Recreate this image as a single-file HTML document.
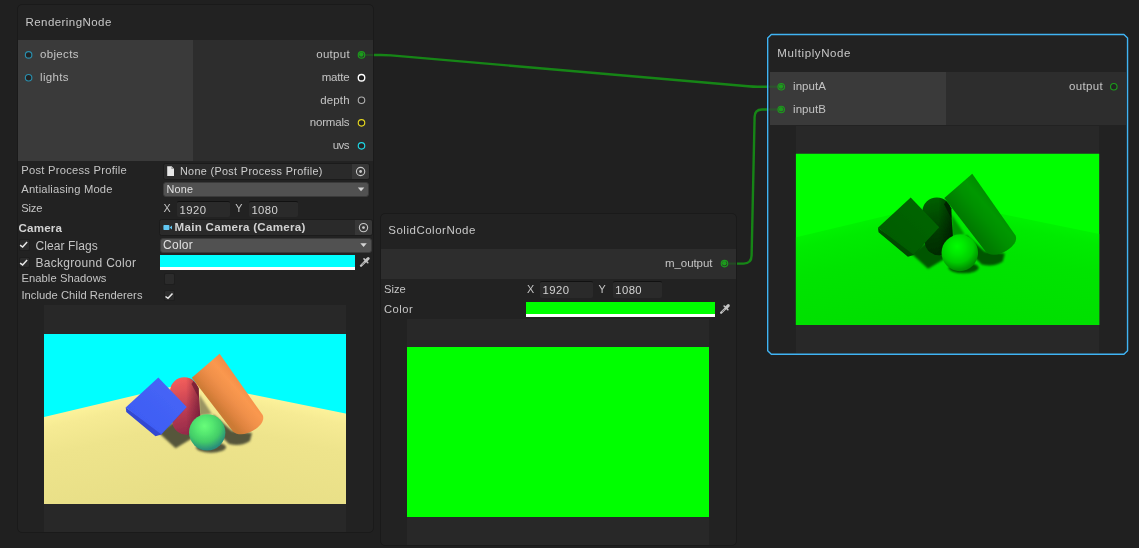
<!DOCTYPE html>
<html><head><meta charset="utf-8"><title>Graph</title>
<style>
html,body{margin:0;padding:0;}
body{width:1139px;height:548px;overflow:hidden;background:#202020;position:relative;font-family:'Liberation Sans',sans-serif;}
.a{position:absolute;box-sizing:border-box;}
.t{position:absolute;white-space:pre;line-height:20px;height:20px;}
.node{border:1px solid #1a1a1a;border-radius:5px;background:#222222;}
.in{background:#3a3a3a;}
.out{background:#2d2d2d;}
.obj{background:#2a2a2a;border:1px solid #1b1b1b;border-radius:2.5px;}
.sel{background:#373737;border-radius:0 2px 2px 0;}
.dd{background:#515151;border:0.5px solid #3a3a3a;border-radius:3px;}
.num{background:#2a2a2a;border:0;border-top:1px solid #111111;border-radius:2px;}
.chk{background:#2b2b2b;border:1px solid #1e1e1e;border-radius:2px;}
.prev{background:#282828;}
svg{position:absolute;overflow:visible;}
.txt{position:absolute;left:0;top:0;width:1139px;height:548px;will-change:transform;}

</style></head>
<body>
<!-- RenderingNode -->
<div class="a node" style="left:17.3px;top:4px;width:356.8px;height:528.7px;"></div>
<div class="a in" style="left:18px;top:40px;width:175px;height:121px;"></div>
<div class="a out" style="left:193px;top:40px;width:180px;height:121px;"></div>
<!-- inspector fields -->
<div class="a obj" style="left:163.3px;top:163px;width:206.5px;height:16.7px;"></div>
<div class="a sel" style="left:352px;top:164px;width:16.8px;height:14.7px;"></div>
<div class="a dd" style="left:163.4px;top:181.7px;width:206px;height:15.5px;"></div>
<div class="a num" style="left:177px;top:200.5px;width:53px;height:16.5px;"></div>
<div class="a num" style="left:249px;top:200.5px;width:49px;height:16.5px;"></div>
<div class="a obj" style="left:159.3px;top:219.3px;width:213.5px;height:16.4px;"></div>
<div class="a sel" style="left:355px;top:220.3px;width:16.8px;height:14.4px;"></div>
<div class="a dd" style="left:159.8px;top:237.8px;width:212.5px;height:15.2px;"></div>
<div class="a" style="left:159.9px;top:254.7px;width:195.3px;height:12.2px;background:#00ffff;"></div>
<div class="a" style="left:159.9px;top:266.9px;width:195.3px;height:3.3px;background:#ffffff;"></div>
<div class="a chk" style="left:18.5px;top:239px;width:11px;height:11.5px;"></div>
<div class="a chk" style="left:18.5px;top:256.5px;width:11px;height:11.5px;"></div>
<div class="a chk" style="left:163.5px;top:272.8px;width:11px;height:11.8px;"></div>
<div class="a chk" style="left:163.5px;top:289.6px;width:11px;height:11.8px;"></div>
<div class="a prev" style="left:44px;top:305px;width:302px;height:227px;"></div>

<!-- SolidColorNode -->
<div class="a node" style="left:379.8px;top:213px;width:357.2px;height:333.2px;"></div>
<div class="a out" style="left:380.5px;top:249px;width:355.5px;height:30px;"></div>
<div class="a num" style="left:540px;top:281.2px;width:52.5px;height:16.5px;"></div>
<div class="a num" style="left:613px;top:281.2px;width:49px;height:16.5px;"></div>
<div class="a" style="left:526px;top:301.7px;width:189.1px;height:12.3px;background:#00ff00;"></div>
<div class="a" style="left:526px;top:314px;width:189.1px;height:3.2px;background:#ffffff;"></div>
<div class="a prev" style="left:407px;top:319.4px;width:302px;height:225.6px;"></div>
<div class="a" style="left:407px;top:347px;width:302px;height:170px;background:#00ff00;"></div>

<!-- MultiplyNode -->
<div class="a node" style="left:767.5px;top:34.3px;width:360.3px;height:320.3px;border-radius:5px;"></div>
<div class="a in" style="left:769.5px;top:72px;width:176.5px;height:53px;"></div>
<div class="a out" style="left:946px;top:72px;width:179.5px;height:53px;"></div>
<div class="a prev" style="left:796px;top:126px;width:303px;height:226.5px;"></div>

<svg width="1139" height="548" viewBox="0 0 1139 548" style="left:0;top:0;">
<defs>
  <linearGradient id="floorL" gradientUnits="userSpaceOnUse" x1="191" y1="382" x2="216.5" y2="489"><stop offset="0" stop-color="#fcf29a"/><stop offset="0.1" stop-color="#f6eb94"/><stop offset="0.35" stop-color="#eee48c"/><stop offset="1" stop-color="#e7de86"/></linearGradient>
  <linearGradient id="floorR" gradientUnits="userSpaceOnUse" x1="191" y1="382" x2="169" y2="489.8"><stop offset="0" stop-color="#fcf29a"/><stop offset="0.1" stop-color="#f6eb94"/><stop offset="0.35" stop-color="#eee48c"/><stop offset="1" stop-color="#e7de86"/></linearGradient>
  <radialGradient id="vig" gradientUnits="userSpaceOnUse" cx="195" cy="400" r="190">
    <stop offset="0" stop-color="#000" stop-opacity="0"/><stop offset="0.6" stop-color="#000" stop-opacity="0"/><stop offset="1" stop-color="#000" stop-opacity="0.06"/>
  </radialGradient>
  <radialGradient id="sph" gradientUnits="userSpaceOnUse" cx="204.5" cy="426" r="27">
    <stop offset="0" stop-color="#68fd7a"/><stop offset="0.3" stop-color="#55e870"/><stop offset="0.6" stop-color="#42cc68"/><stop offset="0.85" stop-color="#2c9478"/><stop offset="1" stop-color="#267c80"/>
  </radialGradient>
  <linearGradient id="cyl" gradientUnits="userSpaceOnUse" x1="191.8" y1="377.8" x2="219.6" y2="353.8">
    <stop offset="0" stop-color="#cc7a34"/><stop offset="0.2" stop-color="#e08440"/><stop offset="0.45" stop-color="#f0904a"/><stop offset="0.72" stop-color="#fa984f"/><stop offset="1" stop-color="#f28c46"/>
  </linearGradient>
  <linearGradient id="cap" gradientUnits="userSpaceOnUse" x1="178" y1="376" x2="192" y2="436">
    <stop offset="0" stop-color="#f8625c"/><stop offset="0.25" stop-color="#e05258"/><stop offset="0.6" stop-color="#b83a52"/><stop offset="1" stop-color="#902848"/>
  </linearGradient>
  <linearGradient id="capsh" gradientUnits="userSpaceOnUse" x1="186" y1="0" x2="200" y2="0">
    <stop offset="0" stop-color="#50102a" stop-opacity="0"/><stop offset="1" stop-color="#50102a" stop-opacity="0.55"/>
  </linearGradient>
  <linearGradient id="cube" gradientUnits="userSpaceOnUse" x1="175" y1="385" x2="140" y2="425">
    <stop offset="0" stop-color="#4766f6"/><stop offset="1" stop-color="#3d5cf4"/>
  </linearGradient>
  <filter id="blur2" x="-50%" y="-50%" width="200%" height="200%"><feGaussianBlur stdDeviation="1.0"/></filter>
  <filter id="blur1" x="-20%" y="-20%" width="140%" height="140%"><feGaussianBlur stdDeviation="0.45"/></filter>
  <filter id="gonly" color-interpolation-filters="sRGB" x="0" y="0" width="100%" height="100%">
    <feColorMatrix type="matrix" values="0 0 0 0 0  0 1 0 0 0  0 0 0 0 0  0 0 0 1 0"/>
  </filter>
  <clipPath id="clipA"><rect x="44" y="334" width="302" height="170"/></clipPath>
</defs>
<g clip-path="url(#clipA)">
    <rect x="43" y="333" width="304" height="172" fill="#00ffff"/>
    <g filter="url(#blur1)"><path d="M40 418 L191.5 381.9 L191.5 508 L40 508 Z" fill="url(#floorL)"/><path d="M191 382 L350 414.4 L350 508 L191 508 Z" fill="url(#floorR)"/></g>
    <!-- shadows -->
    <g filter="url(#blur2)" fill="#56563a">
      <path d="M159 433 L175.6 448.3 L191 439 L197 426 L172 423 Z"/>
      <ellipse cx="211" cy="447.3" rx="15" ry="5.4"/>
      <path d="M213 414 L232 431 L252 433 L250 441 Q241 447 229 444 L216 431 Z"/>
      <path d="M199 394 L212 414 L199 416 Z" fill="#9a9462"/>
    </g>
    <!-- red capsule -->
    <g filter="url(#blur1)">
    <path d="M170 391.6 A14.3 14.3 0 0 1 198.6 391.6 L200.6 421 A14.2 14.2 0 0 1 172.4 423 Z" fill="url(#cap)"/>
    <path d="M170 391.6 A14.3 14.3 0 0 1 198.6 391.6 L200.6 421 A14.2 14.2 0 0 1 172.4 423 Z" fill="url(#capsh)"/>
    <path d="M193.5 381 L199 388 L198.8 398 L191.5 384 Z" fill="#6a1830" opacity="0.7"/>
    </g>
    <!-- orange cylinder -->
    <path d="M191.8 377.8 L219.6 353.8 L262.7 415.1 C264.8 420 261 425.5 254 430 C247 434.5 238 436 233 431.4 Z" fill="url(#cyl)" filter="url(#blur1)"/>
    <!-- blue cube -->
    <g filter="url(#blur1)">
    <path d="M125.7 407.5 L126.3 412 L155.5 436.2 L161.4 434.6 L186.7 407 L160 431 Z" fill="#3348d2"/>
    <path d="M158.3 377.4 L186.7 406.9 L161.2 434.3 L125.7 407.5 Z" fill="url(#cube)"/>
    </g>
    <!-- green sphere -->
    <circle cx="207.2" cy="432.4" r="18.2" fill="url(#sph)" filter="url(#blur1)"/>
</g>
<g transform="translate(795.9,153.8) scale(1.0043,1.0065) translate(-44,-334)" filter="url(#gonly)">
<g clip-path="url(#clipA)">
    <rect x="43" y="333" width="304" height="172" fill="#00ffff"/>
    <g filter="url(#blur1)"><path d="M40 418 L191.5 381.9 L191.5 508 L40 508 Z" fill="url(#floorL)"/><path d="M191 382 L350 414.4 L350 508 L191 508 Z" fill="url(#floorR)"/></g>
    <!-- shadows -->
    <g filter="url(#blur2)" fill="#56563a">
      <path d="M159 433 L175.6 448.3 L191 439 L197 426 L172 423 Z"/>
      <ellipse cx="211" cy="447.3" rx="15" ry="5.4"/>
      <path d="M213 414 L232 431 L252 433 L250 441 Q241 447 229 444 L216 431 Z"/>
      <path d="M199 394 L212 414 L199 416 Z" fill="#9a9462"/>
    </g>
    <!-- red capsule -->
    <g filter="url(#blur1)">
    <path d="M170 391.6 A14.3 14.3 0 0 1 198.6 391.6 L200.6 421 A14.2 14.2 0 0 1 172.4 423 Z" fill="url(#cap)"/>
    <path d="M170 391.6 A14.3 14.3 0 0 1 198.6 391.6 L200.6 421 A14.2 14.2 0 0 1 172.4 423 Z" fill="url(#capsh)"/>
    <path d="M193.5 381 L199 388 L198.8 398 L191.5 384 Z" fill="#6a1830" opacity="0.7"/>
    </g>
    <!-- orange cylinder -->
    <path d="M191.8 377.8 L219.6 353.8 L262.7 415.1 C264.8 420 261 425.5 254 430 C247 434.5 238 436 233 431.4 Z" fill="url(#cyl)" filter="url(#blur1)"/>
    <!-- blue cube -->
    <g filter="url(#blur1)">
    <path d="M125.7 407.5 L126.3 412 L155.5 436.2 L161.4 434.6 L186.7 407 L160 431 Z" fill="#3348d2"/>
    <path d="M158.3 377.4 L186.7 406.9 L161.2 434.3 L125.7 407.5 Z" fill="url(#cube)"/>
    </g>
    <!-- green sphere -->
    <circle cx="207.2" cy="432.4" r="18.2" fill="url(#sph)" filter="url(#blur1)"/>
</g>
</g>
</svg>
<svg width="1139" height="548" viewBox="0 0 1139 548" style="left:0;top:0;">
<g fill="none" stroke="#168516" stroke-width="2.4" stroke-linecap="butt">
<path d="M373.9 55 L381 55 Q386 55 391 55.4 L748 86.2 Q753 86.7 758 86.7 L767 86.7"/>
<path d="M737 263.6 L743.5 263.6 Q751.5 263.6 751.6 255.6 L754.6 117 Q754.8 109.5 762 109.5 L767 109.5"/>
</g>
<g fill="none" stroke="#168516" stroke-width="2.2" opacity="0.32">
<path d="M365 55 L373 55"/><path d="M768.5 86.7 L777.5 86.7"/><path d="M728.5 263.6 L736 263.6"/><path d="M768.5 109.5 L777.5 109.5"/>
</g>
<circle cx="28.6" cy="54.9" r="3.25" fill="#232323" stroke="#2a8fae" stroke-width="1.15"/>
<circle cx="28.6" cy="77.7" r="3.25" fill="#232323" stroke="#2a8fae" stroke-width="1.15"/>
<circle cx="361.5" cy="54.9" r="3.25" fill="none" stroke="#1c9c1c" stroke-width="1.15"/><circle cx="361.3" cy="54.6" r="2.25" fill="#1c9c1c"/>
<circle cx="361.5" cy="77.7" r="3.25" fill="#1e1e1e" stroke="#ffffff" stroke-width="1.35"/>
<circle cx="361.5" cy="100.2" r="3.25" fill="#262626" stroke="#b0b0b0" stroke-width="1.1"/>
<circle cx="361.5" cy="122.8" r="3.25" fill="#232323" stroke="#e6d81e" stroke-width="1.15"/>
<circle cx="361.5" cy="145.8" r="3.25" fill="#232323" stroke="#1ed8e6" stroke-width="1.15"/>
<circle cx="724.5" cy="263.6" r="3.25" fill="none" stroke="#1c9c1c" stroke-width="1.15"/><circle cx="724.3" cy="263.3" r="2.25" fill="#1c9c1c"/>
<circle cx="781.2" cy="86.7" r="3.25" fill="none" stroke="#1c9c1c" stroke-width="1.15"/><circle cx="781.0" cy="86.4" r="2.25" fill="#1c9c1c"/>
<circle cx="781.2" cy="109.5" r="3.25" fill="none" stroke="#1c9c1c" stroke-width="1.15"/><circle cx="781.0" cy="109.2" r="2.25" fill="#1c9c1c"/>
<circle cx="1113.8" cy="86.7" r="3.25" fill="#232323" stroke="#1c9c1c" stroke-width="1.15"/>
<circle cx="360.6" cy="171.5" r="4.15" fill="none" stroke="#c8c8c8" stroke-width="1.1"/><circle cx="360.6" cy="171.5" r="1.4" fill="#c8c8c8"/>
<circle cx="363.5" cy="227.6" r="4.15" fill="none" stroke="#c8c8c8" stroke-width="1.1"/><circle cx="363.5" cy="227.6" r="1.4" fill="#c8c8c8"/>
<path d="M357.8 187.4 L364.3 187.4 L361.05 191.20000000000002 Z" fill="#d4d4d4"/>
<path d="M360.3 243.2 L366.8 243.2 L363.55 247.0 Z" fill="#d4d4d4"/>
<path d="M20.1 245.2 L22.6 247.0 L27.1 242.1" fill="none" stroke="#e8e8e8" stroke-width="1.5"/>
<path d="M20.1 263.09999999999997 L22.6 264.9 L27.1 260.0" fill="none" stroke="#e8e8e8" stroke-width="1.5"/>
<path d="M165.5 296.49999999999994 L168.0 298.29999999999995 L172.5 293.4" fill="none" stroke="#e8e8e8" stroke-width="1.5"/>
<path d="M167.2 166.3 L171.6 166.3 L174 168.8 L174 175.9 L167.2 175.9 Z" fill="#e6e6e6"/><path d="M171.4 166.3 L171.4 169 L174 169 Z" fill="#9a9a9a"/>
<rect x="163.4" y="225" width="6" height="5" rx="0.8" fill="#62c8f4"/><path d="M169.6 227.5 L172 225.4 L172 229.6 Z" fill="#62c8f4"/>
<g stroke="#c4c4c4" fill="none" stroke-linecap="round"><path d="M361.0 265.7 L365.6 261.1" stroke-width="2.3"/><path d="M364.0 258.9 L367.8 262.7" stroke-width="1.6"/><path d="M366.4 260.3 L368.2 258.5" stroke-width="3"/></g>
<g stroke="#c4c4c4" fill="none" stroke-linecap="round"><path d="M721.1 312.8 L725.7 308.2" stroke-width="2.3"/><path d="M724.1 306.0 L727.9 309.8" stroke-width="1.6"/><path d="M726.5 307.4 L728.3 305.6" stroke-width="3"/></g>
<path d="M771.3000000000001 34.5 L1123.95 34.5 L1127.55 38.1 L1127.55 350.7 L1123.95 354.3 L771.3000000000001 354.3 L767.7 350.7 L767.7 38.1 Z" fill="none" stroke="#40b4f4" stroke-width="1.4" stroke-linejoin="round"/>
<path d="M361.9 264.8 L364.4 262.3" stroke="#4a4a4a" stroke-width="0.7" fill="none"/><path d="M722.0 311.9 L724.5 309.4" stroke="#4a4a4a" stroke-width="0.7" fill="none"/>
</svg>

<div class="txt">
<span class="t" style="left:25.50px;top:12.02px;font-size:11.5px;color:#c8c8c8;letter-spacing:0.436px;font-weight:400">RenderingNode</span>
<span class="t" style="left:40.10px;top:44.02px;font-size:11.5px;color:#c4c4c4;letter-spacing:0.310px;font-weight:400">objects</span>
<span class="t" style="left:40.10px;top:66.82px;font-size:11.5px;color:#c4c4c4;letter-spacing:0.288px;font-weight:400">lights</span>
<span class="t" style="left:316.30px;top:44.12px;font-size:11.5px;color:#c4c4c4;letter-spacing:0.263px;font-weight:400">output</span>
<span class="t" style="left:321.70px;top:66.92px;font-size:11.5px;color:#c4c4c4;letter-spacing:-0.216px;font-weight:400">matte</span>
<span class="t" style="left:320.20px;top:89.92px;font-size:11.5px;color:#c4c4c4;letter-spacing:0.155px;font-weight:400">depth</span>
<span class="t" style="left:309.70px;top:112.42px;font-size:11.5px;color:#c4c4c4;letter-spacing:-0.168px;font-weight:400">normals</span>
<span class="t" style="left:332.70px;top:135.02px;font-size:11.5px;color:#c4c4c4;letter-spacing:-0.503px;font-weight:400">uvs</span>
<span class="t" style="left:21.30px;top:160.42px;font-size:11.2px;color:#c4c4c4;letter-spacing:0.251px;font-weight:400">Post Process Profile</span>
<span class="t" style="left:21.30px;top:179.12px;font-size:11.2px;color:#c4c4c4;letter-spacing:0.180px;font-weight:400">Antialiasing Mode</span>
<span class="t" style="left:21.30px;top:198.12px;font-size:11.2px;color:#c4c4c4;letter-spacing:-0.189px;font-weight:400">Size</span>
<span class="t" style="left:18.50px;top:217.58px;font-size:11.6px;color:#d2d2d2;letter-spacing:0.191px;font-weight:700">Camera</span>
<span class="t" style="left:35.50px;top:235.84px;font-size:12px;color:#c4c4c4;letter-spacing:0.084px;font-weight:400">Clear Flags</span>
<span class="t" style="left:35.50px;top:252.84px;font-size:12px;color:#c4c4c4;letter-spacing:0.296px;font-weight:400">Background Color</span>
<span class="t" style="left:21.40px;top:267.92px;font-size:11.2px;color:#c4c4c4;letter-spacing:0.079px;font-weight:400">Enable Shadows</span>
<span class="t" style="left:21.40px;top:285.42px;font-size:11.2px;color:#c4c4c4;letter-spacing:0.049px;font-weight:400">Include Child Renderers</span>
<span class="t" style="left:179.90px;top:161.06px;font-size:10.8px;color:#cfcfcf;letter-spacing:0.357px;font-weight:400">None (Post Process Profile)</span>
<span class="t" style="left:166.50px;top:178.86px;font-size:10.8px;color:#e0e0e0;letter-spacing:0.196px;font-weight:400">None</span>
<span class="t" style="left:163.50px;top:198.06px;font-size:10.8px;color:#c4c4c4;letter-spacing:0.000px;font-weight:400">X</span>
<span class="t" style="left:179.60px;top:199.58px;font-size:11.3px;color:#d2d2d2;letter-spacing:0.420px;font-weight:400">1920</span>
<span class="t" style="left:235.30px;top:198.06px;font-size:10.8px;color:#c4c4c4;letter-spacing:0.000px;font-weight:400">Y</span>
<span class="t" style="left:251.40px;top:199.58px;font-size:11.3px;color:#d2d2d2;letter-spacing:0.386px;font-weight:400">1080</span>
<span class="t" style="left:174.50px;top:217.28px;font-size:11.6px;color:#d2d2d2;letter-spacing:0.276px;font-weight:700">Main Camera (Camera)</span>
<span class="t" style="left:163.10px;top:234.74px;font-size:12px;color:#e0e0e0;letter-spacing:0.228px;font-weight:400">Color</span>
<span class="t" style="left:388.30px;top:220.02px;font-size:11.5px;color:#c8c8c8;letter-spacing:0.504px;font-weight:400">SolidColorNode</span>
<span class="t" style="left:665.00px;top:252.92px;font-size:11.5px;color:#c4c4c4;letter-spacing:-0.079px;font-weight:400">m_output</span>
<span class="t" style="left:384.00px;top:279.12px;font-size:11.2px;color:#c4c4c4;letter-spacing:0.011px;font-weight:400">Size</span>
<span class="t" style="left:384.00px;top:299.12px;font-size:11.2px;color:#c4c4c4;letter-spacing:0.516px;font-weight:400">Color</span>
<span class="t" style="left:527.00px;top:279.06px;font-size:10.8px;color:#c4c4c4;letter-spacing:0.000px;font-weight:400">X</span>
<span class="t" style="left:542.50px;top:280.08px;font-size:11.3px;color:#d2d2d2;letter-spacing:0.453px;font-weight:400">1920</span>
<span class="t" style="left:598.50px;top:279.06px;font-size:10.8px;color:#c4c4c4;letter-spacing:0.000px;font-weight:400">Y</span>
<span class="t" style="left:615.30px;top:280.08px;font-size:11.3px;color:#d2d2d2;letter-spacing:0.386px;font-weight:400">1080</span>
<span class="t" style="left:777.30px;top:43.02px;font-size:11.5px;color:#c8c8c8;letter-spacing:0.611px;font-weight:400">MultiplyNode</span>
<span class="t" style="left:793.00px;top:76.02px;font-size:11.5px;color:#c4c4c4;letter-spacing:0.078px;font-weight:400">inputA</span>
<span class="t" style="left:793.00px;top:98.82px;font-size:11.5px;color:#c4c4c4;letter-spacing:0.078px;font-weight:400">inputB</span>
<span class="t" style="left:1069.00px;top:76.02px;font-size:11.5px;color:#c4c4c4;letter-spacing:0.323px;font-weight:400">output</span>
</div>
</body></html>
